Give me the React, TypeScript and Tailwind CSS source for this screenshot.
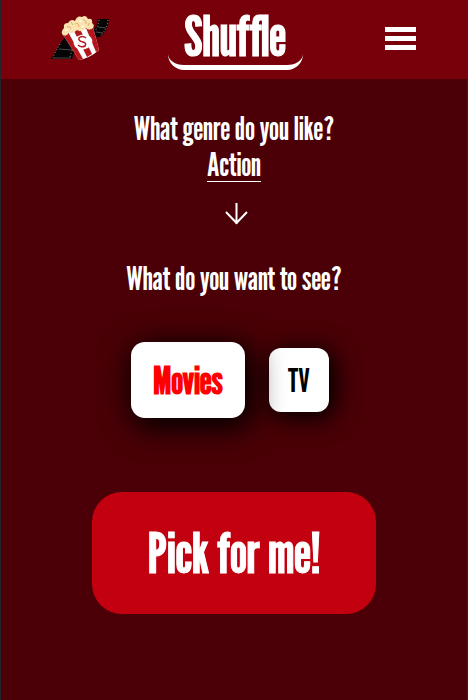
import React, { useState } from "react";

function PopcornLogo() {
  return (
    <svg width="60" height="46" viewBox="0 0 60 46" role="img" aria-label="Shuffle popcorn">
      <path d="M15 22 L26 36 Q23 39 22 44 L1 44 Q5 37 9 30Z" fill="#050505" />
      <path d="M40 17 Q47 14 48 4 L59 4 Q58 16 50 22 L43 22Z" fill="#050505" />
      <path d="M10 29 Q5 37 3 43 M20 42 Q21 37 23 34 M49 5 Q48 12 45 16 M58 5 Q57 15 50 21" fill="none" stroke="#bbb" strokeWidth="0.8" strokeDasharray="1 2" />
      <path d="M9 34 L22 35 M3 43 L21 43 M48 12 L56 13 M46 17 L53 18" fill="none" stroke="#777" strokeWidth="0.6" />
      <path d="M12 18 L43 12 L49 35 Q40 43 29 45Z" fill="#fff" />
      <path d="M12 18 L18 17 L33 44 L29 45Z M24 16 L30 14 L42 39 L37 42Z M36 13 L43 12 L49 35 L46 37Z" fill="#b3161c" />
      <path d="M13 20 Q10 17 14 13 Q13 8 18 8 Q21 3 25 6 Q27 0 32 2 Q36 -1 38 4 Q43 3 42 8 Q45 10 43 13 Q39 16 36 13 Q31 18 27 15 Q22 20 19 17 Q17 22 13 20Z" fill="#fae3b0" />
      <path d="M17 12 Q20 10 21 14 M25 9 Q29 7 29 12 M33 5 Q37 5 36 9 M21 7 L23 10 M39 8 L38 11" fill="none" stroke="#e0ae69" strokeWidth="1" />
      <path d="M15 15 L18 15 M29 5 L32 7 M31 12 L34 11" stroke="#fff7df" strokeWidth="2" />
      <ellipse cx="33" cy="27" rx="9.500" ry="7.500" fill="#fff" transform="rotate(-12 33 27)" />
      <path d="M36 23 Q32 20 29 23 Q28 26 33 27 Q37 28 35 31 Q31 33 28 30" fill="none" stroke="#b3161c" strokeWidth="1.5" />
    </svg>
  );
}

export default function App() {
  const [kind, setKind] = useState("Movies");
  const choice = (name: string) =>
    kind === name
      ? "relative z-10 h-[76px] px-[22px] rounded-[14px] text-[38px] font-bold text-[#ff0000] shadow-[4px_6px_30px_4px_#000000]"
      : "h-16 px-[19px] rounded-[12px] text-[32px] text-black shadow-[4px_4px_24px_2px_#000000]";

  return (
    <div className="min-h-screen border-x border-[#24272a] bg-[#4a0006] text-white font-['League_Gothic','Roboto_Condensed','Liberation_Sans_Narrow','Liberation_Sans',sans-serif]">
      <header className="flex h-[79px] items-start justify-between bg-[#78000a] pr-[51px] pl-[49px]">
        <a href="#home" className="mt-[15px]"><PopcornLogo /></a>
        <h1 className="mt-2 ml-1 flex h-[62px] w-[135px] items-center justify-center rounded-b-[16px] border-b-[5px] border-white text-[55px] leading-none font-normal [-webkit-text-stroke:1px_white]">Shuffle</h1>
        <button type="button" aria-label="Menu" className="mt-[27px] ml-[29px] flex w-[31px] flex-col gap-1">
          <span className="h-[5px] w-full bg-white" />
          <span className="h-[5px] w-full bg-white" />
          <span className="h-[5px] w-full bg-white" />
        </button>
      </header>
      <main className="flex flex-col items-center pt-[31px]">
        <label htmlFor="genre" className="text-[32px] leading-9">What genre do you like?</label>
        <select id="genre" defaultValue="Action" className="field-sizing-content h-9 appearance-none border-b border-white bg-transparent text-center text-[32px] leading-9">
          <option>Action</option>
        </select>
        <svg className="mt-5 ml-1" width="24" height="24" viewBox="0 0 24 24" fill="none" stroke="white" strokeWidth="2" aria-hidden="true">
          <path d="M12.500 1 V22 M2 10 L12.500 21 L23 10" />
        </svg>
        <h2 className="mt-8 text-[32px] leading-10">What do you want to see?</h2>
        <div className="mt-11 mr-2 flex items-center gap-6">
          {["Movies", "TV"].map((name) => (
            <button key={name} type="button" aria-pressed={kind === name} onClick={() => setKind(name)} className={`bg-white ${choice(name)}`}>{name}</button>
          ))}
        </div>
        <button type="button" className="mt-[74px] h-[122px] w-[284px] rounded-[30px] bg-[#c2000f] text-[55px] [-webkit-text-stroke:1px_white]">Pick for me!</button>
      </main>
    </div>
  );
}
